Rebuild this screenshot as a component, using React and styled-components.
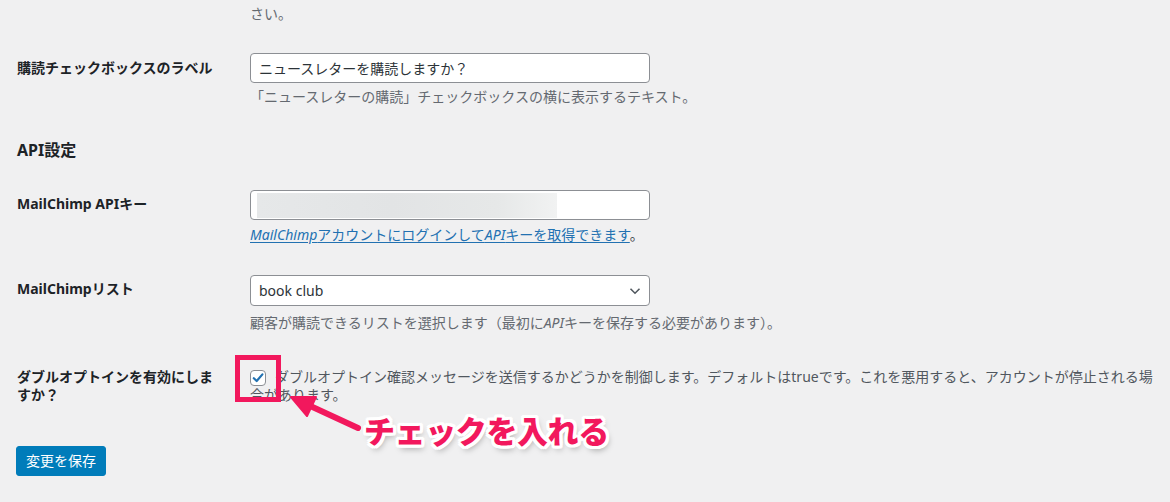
import React from "react";
import styled, { createGlobalStyle } from "styled-components";

const GlobalStyle = createGlobalStyle`
  html, body { margin: 0; padding: 0; background: #f0f0f1; }
  body {
    font-family: "Noto Sans", "Noto Sans CJK JP", sans-serif;
    font-size: 14px;
    color: #1d2327;
  }
  * { box-sizing: border-box; }
`;

const Page = styled.div`
  position: relative;
  width: 1170px;
  height: 502px;
  overflow: hidden;
  padding: 0 8px 0 16px;
`;

const Row = styled.div`
  display: grid;
  grid-template-columns: 234px 1fr;
  align-items: start;
  padding-top: ${(p) => p.$top || 0}px;
`;

const Label = styled.div`
  width: 205px;
  padding-left: 1px;
  font-weight: 700;
  font-size: 14px;
  line-height: ${(p) => p.$lh || 18}px;
  color: #1d2327;
`;

const Field = styled.div`
  display: flex;
  flex-direction: column;
  align-items: flex-start;
`;

const TextInput = styled.div`
  width: 400px;
  height: ${(p) => p.$h || 30}px;
  background: #fff;
  border: 1px solid #8c8f94;
  border-radius: 4px;
  padding: 0 8px;
  display: flex;
  align-items: center;
  font-size: 14px;
  color: #2c3338;
  position: relative;
`;

const BlurredKey = styled.div`
  width: 300px;
  height: 25px;
  margin-left: -2px;
  background: linear-gradient(90deg, #e6e8e9 0%, #e2e4e5 45%, #e6e8e8 80%, #f1f2f2 100%);
`;

const Chevron = styled.svg`
  position: absolute;
  right: 8px;
  top: 50%;
  transform: translateY(-50%);
`;

const Description = styled.p`
  margin: ${(p) => p.$mt || 4}px 0 0;
  font-size: 14px;
  line-height: 20px;
  color: #646970;
`;

const Note = styled.p`
  margin: 5px 0 0;
  font-size: 14px;
  line-height: 20px;
  color: #3c434a;
`;

const Link = styled.a`
  color: #2271b1;
  text-decoration: underline;
  text-underline-offset: 2px;
  em { font-style: italic; }
`;

const SectionTitle = styled.h2`
  margin: 31px 0 0;
  padding-left: 1px;
  font-size: 16px;
  font-weight: 700;
  line-height: 24px;
  color: #1d2327;
`;

const CheckLine = styled.div`
  font-size: 14px;
  line-height: 18px;
  color: #50575e;
  padding-right: 4px;
`;

const CheckBox = styled.span`
  display: inline-flex;
  align-items: center;
  justify-content: center;
  width: 16px;
  height: 16px;
  margin-right: 9px;
  vertical-align: -2px;
  background: #fff;
  border: 1px solid #8c8f94;
  border-radius: 4px;
`;

const SaveButton = styled.button`
  margin-top: 42px;
  height: 30px;
  padding: 0 9px;
  background: #007cba;
  border: 1px solid #007cba;
  border-radius: 3px;
  color: #fff;
  font-family: inherit;
  font-size: 14px;
  line-height: 28px;
`;

const Highlight = styled.div`
  position: absolute;
  left: 235px;
  top: 355px;
  width: 46px;
  height: 47px;
  border: 5px solid #f2185d;
`;

const ArrowSvg = styled.svg`
  position: absolute;
  left: 0;
  top: 0;
  pointer-events: none;
`;

const Callout = styled.div`
  position: absolute;
  left: 364px;
  top: 408px;
  font-family: "Noto Sans CJK JP", sans-serif;
  font-size: 31px;
  font-weight: 900;
  line-height: 44px;
  color: #f2185d;
  letter-spacing: -0.4px;
  white-space: nowrap;
  text-shadow:
    3px 0 0 #fff, -3px 0 0 #fff, 0 3px 0 #fff, 0 -3px 0 #fff,
    2px 2px 0 #fff, -2px 2px 0 #fff, 2px -2px 0 #fff, -2px -2px 0 #fff,
    3px 2px 0 #fff, -3px 2px 0 #fff, 3px -2px 0 #fff, -3px -2px 0 #fff,
    2px 3px 0 #fff, -2px 3px 0 #fff, 2px -3px 0 #fff, -2px -3px 0 #fff,
    2px 4px 6px rgba(0, 0, 0, 0.35);
`;

export default function App() {
  return (
    <>
      <GlobalStyle />
      <Page>
        <Row $top={0}>
          <div />
          <Description $mt={0}>さい。</Description>
        </Row>

        <Row $top={29}>
          <Label $lh={30}>購読チェックボックスのラベル</Label>
          <Field>
            <TextInput>ニュースレターを購読しますか？</TextInput>
            <Description>「ニュースレターの購読」チェックボックスの横に表示するテキスト。</Description>
          </Field>
        </Row>

        <SectionTitle>API設定</SectionTitle>

        <Row $top={28}>
          <Label $lh={28}>MailChimp APIキー</Label>
          <Field>
            <TextInput>
              <BlurredKey />
            </TextInput>
            <Note>
              <Link href="#">
                <em>MailChimp</em>アカウントにログインして<em>API</em>キーを取得できます
              </Link>
              。
            </Note>
          </Field>
        </Row>

        <Row $top={30}>
          <Label $lh={28}>MailChimpリスト</Label>
          <Field>
            <TextInput $h={31}>
              book club
              <Chevron width="12" height="8" viewBox="0 0 12 8">
                <path d="M1.5 1.8 L6 6.2 L10.5 1.8" fill="none" stroke="#50575e" strokeWidth="1.6" />
              </Chevron>
            </TextInput>
            <Description $mt={7}>
              顧客が購読できるリストを選択します（最初に<em>API</em>キーを保存する必要があります）。
            </Description>
          </Field>
        </Row>

        <Row $top={35}>
          <Label $lh={18}>ダブルオプトインを有効にしますか？</Label>
          <CheckLine>
            <CheckBox>
              <svg width="12" height="12" viewBox="0 0 12 12">
                <path d="M1.8 6.2 L4.7 9 L10.4 2.4" fill="none" stroke="#2271b1" strokeWidth="2.2" strokeLinecap="round" strokeLinejoin="round" />
              </svg>
            </CheckBox>
            ダブルオプトイン確認メッセージを送信するかどうかを制御します。デフォルトはtrueです。これを悪用すると、アカウントが停止される場合があります。
          </CheckLine>
        </Row>

        <SaveButton>変更を保存</SaveButton>

        <Highlight />
        <ArrowSvg width="1170" height="502" viewBox="0 0 1170 502">
          <line x1="358" y1="428" x2="306" y2="404" stroke="#f2185d" strokeWidth="6" strokeLinecap="round" />
          <polygon points="291,397 316,397 307,416" fill="#f2185d" stroke="#f2185d" strokeWidth="2" strokeLinejoin="round" />
        </ArrowSvg>
        <Callout>チェックを入れる</Callout>
      </Page>
    </>
  );
}
